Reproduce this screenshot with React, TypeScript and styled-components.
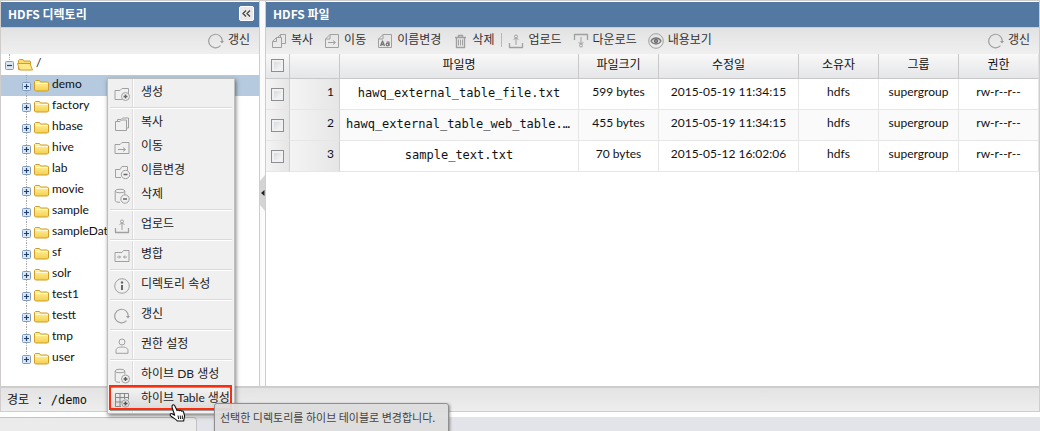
import React from 'react';
import styled, { createGlobalStyle, css } from 'styled-components';

const sans = `Lato, "Noto Sans CJK KR", sans-serif`;
const hangul = `"Noto Sans CJK KR", sans-serif`;
const mono = `"DejaVu Sans Mono", "Noto Sans CJK KR", monospace`;
const line = '#cfcccc';

const GlobalStyle = createGlobalStyle`
  *, *::before, *::after { box-sizing: border-box; }
  body { margin: 0; background: #fff; color: #222; font: 12px/16px ${sans}; }
  button { border: 0; padding: 0; background: none; color: inherit; font: inherit; cursor: default; }
  ul { list-style: none; margin: 0; padding: 0; }
  svg { display: block; flex: none; }
`;

const Page = styled.div`
  position: relative;
  display: flex;
  flex-direction: column;
  height: 100vh;
  overflow: hidden;
`;

const Workspace = styled.main`
  display: flex;
  flex: 1;
  min-height: 0;
  border-top: 1px solid ${line};
`;

const Panel = styled.section<{ $grow?: boolean }>`
  display: flex;
  flex-direction: column;
  flex: ${(p) => (p.$grow ? '1' : '0 0 260px')};
  min-width: 0;
  padding-top: 1px;
  border: solid ${line};
  border-width: 0 1px;
  background: #fff;
`;

const PanelHeader = styled.header`
  display: flex;
  align-items: center;
  justify-content: space-between;
  flex: none;
  height: 26px;
  padding: 0 5px 2px 7px;
  background: #5379a2;
  border-bottom: 1px solid #c5d0dc;
`;

const PanelTitle = styled.h2`
  margin: 0;
  color: #fff;
  font: bold 12px/16px ${hangul};
`;

const CollapseButton = styled.button`
  display: grid;
  place-items: center;
  width: 15px;
  height: 15px;
  border: 1px solid #fff;
  border-radius: 2px;
  background: #e9e9e9;
`;

const Toolbar = styled.div`
  display: flex;
  align-items: center;
  flex: none;
  gap: 11px;
  height: 26px;
  padding: 0 9px 2px 5px;
  background: linear-gradient(#e2e2e2, #efefef);
  color: #333;
`;

const ToolButton = styled.button<{ $end?: boolean }>`
  display: flex;
  align-items: flex-start;
  gap: 4px;
  margin-left: ${(p) => (p.$end ? 'auto' : '0')};
  font-family: ${hangul};
  white-space: nowrap;

  svg { margin-top: 2px; }
`;

const ToolDivider = styled.span`
  width: 1px;
  height: 14px;
  margin: 0 -5px 0 -4px;
  background: #bfb8a6;
`;

const Tree = styled.ul`
  flex: 1;
  overflow: hidden;
`;

const TreeRow = styled.li<{ $child?: boolean; $selected?: boolean }>`
  position: relative;
  display: flex;
  gap: 3px;
  height: 21px;
  padding-left: ${(p) => (p.$child ? '21px' : '4px')};
  background: ${(p) => (p.$selected ? '#b5cade' : 'transparent')};
  color: #111;

  &::before {
    content: '';
    position: absolute;
    left: ${(p) => (p.$child ? '25px' : '8px')};
    top: 0;
    height: ${(p) => (p.$child ? '21px' : '8px')};
    border-left: 1px dotted #aaa;
  }
  &:last-child::before { height: 8px; }
`;

const TreeToggle = styled.button`
  position: relative;
  align-self: flex-end;
  margin-bottom: 5px;
`;

const FolderSlot = styled.span`
  padding-top: 4px;
`;

const TreeLabel = styled.span`
  line-height: 18px;
`;

const Splitter = styled.div`
  display: flex;
  flex: 0 0 5px;
  padding-top: 174px;
  background: #fbfbfb;
`;

const TableArea = styled.div`
  flex: 1;
  overflow: hidden;
`;

const FileTable = styled.table`
  width: 100%;
  table-layout: fixed;
  border-collapse: separate;
  border-spacing: 0;
`;

const HeadCell = styled.th<{ $width?: number }>`
  width: ${(p) => (p.$width ? `${p.$width}px` : 'auto')};
  height: 25px;
  padding: 0 0 5px;
  border: solid #c8c8c8;
  border-width: 0 1px 1px 0;
  background: linear-gradient(#f8f8f8, #e5e6e8);
  color: #111;
  font: 12px/16px ${hangul};
  text-align: center;

  &:first-child { padding: 0 0 1px; }
  &:last-child { border-right-color: #e2e2e2; }
`;

const BodyRow = styled.tr`
  &:nth-child(even) { background: #fafafa; }
`;

const cellBase = css`
  height: 31px;
  padding: 0 6px 5px;
  border: solid #e6e6e6;
  border-width: 0 1px 1px 0;
  color: #111;
  text-align: center;
  overflow: hidden;
  text-overflow: ellipsis;
  white-space: nowrap;
`;

const Cell = styled.td`
  ${cellBase}
`;

const NameCell = styled.td`
  ${cellBase}
  padding: 0 6px 2px;
  font-family: ${mono};
`;

const SideCell = styled.td<{ $number?: boolean }>`
  ${cellBase}
  padding: ${(p) => (p.$number ? '0 5px 5px' : '0')};
  border-right-color: #d0d0d0;
  background: linear-gradient(90deg, #f4f4f4, #e6e6e6);
  text-align: ${(p) => (p.$number ? 'right' : 'center')};
`;

const Tick = styled.input`
  display: block;
  appearance: none;
  width: 13px;
  height: 13px;
  margin: 0 0 0 5px;
  border: 1px solid #8d8f92;
  background: linear-gradient(135deg, #cfd3d8, #fdfdfd);
  box-shadow: inset 0 0 0 2px #f1f1f1;
`;

const PathBar = styled.div`
  flex: none;
  height: 26px;
  padding: 4px 6px;
  border: 1px solid #d2cdcd;
  border-top: 2px solid #cfcccc;
  background: linear-gradient(#e3e3e3, #eee);
  color: #111;
  font-family: ${mono};
  white-space: pre;
`;

const BelowArea = styled.div`
  flex: none;
  height: 19px;
  border-top: 5px solid #fff;
  background: #e3e4e9;
`;

const DockedTab = styled.div`
  width: 197px;
  height: 14px;
  border: 1px solid #c2c2c2;
  border-width: 1px 1px 0 0;
  border-radius: 0 4px 0 0;
  background: #ebebeb;
`;

const ContextMenu = styled.div`
  position: absolute;
  left: 107px;
  top: 78px;
  width: 128px;
  padding: 2px;
  border: 1px solid #bdbdbd;
  background: linear-gradient(90deg, transparent 24px, #dcdcdc 24px, #dcdcdc 25px, #fff 25px, #fff 26px, transparent 26px), #f0f0f0;
  box-shadow: 1px 2px 4px rgba(0, 0, 0, 0.5);
`;

const MenuGroup = styled.ul`
  & + & {
    margin-top: 2px;
    padding-top: 2px;
    border-top: 1px solid #dadada;
    box-shadow: inset 0 1px #fff;
  }
  & + &::before {
    content: '';
    display: block;
    height: 1px;
  }
`;

const MenuItem = styled.li`
  position: relative;
`;

const MenuButton = styled.button<{ $active?: boolean }>`
  display: flex;
  gap: 11px;
  width: 100%;
  height: 24px;
  padding: 3px 0 0 4px;
  white-space: nowrap;

  svg { margin-top: 2px; }

  ${(p) =>
    p.$active &&
    css`
      background: linear-gradient(#f4f4f4, #d8d8d8);
      box-shadow: inset 0 0 0 1px #9a9a9a;
    `}
`;

const Callout = styled.span`
  position: absolute;
  left: -1px;
  top: -2px;
  width: 123px;
  height: 25px;
  border: 2px solid #fb2d0c;
  pointer-events: none;
`;

const Tooltip = styled.span`
  position: absolute;
  left: 104px;
  top: 16px;
  width: 235px;
  height: 32px;
  padding: 5px;
  border: 1px solid #8f8f8f;
  border-radius: 3px;
  background: rgba(221, 221, 221, 0.94);
  box-shadow: 1px 1px 3px rgba(0, 0, 0, 0.4);
  color: #444;
  font: 11px/16px ${hangul};
  white-space: nowrap;
`;

const Pointer = styled.span`
  position: absolute;
  left: 59px;
  top: 17px;
`;

const drawings: Record<string, React.ReactNode> = {
  copy: (
    <>
      <path d="M7 4 9.500 1.500h5v9h-4M9.500 1.500V4.500" />
      <path d="M1.500 8.500 5.500 4.500h5v10h-9zM5.500 4.500v4h-4" />
    </>
  ),
  move: (
    <>
      <path d="M1.500 6 6 1.500h8.500v13h-13zM6 1.500V6H1.500" />
      <path d="M4 9.500h7M9 7.500l2.500 2L9 11.500" />
    </>
  ),
  rename: (
    <>
      <path d="M1.500 6 6 1.500h8.500v13h-13zM6 1.500V6H1.500" />
      <path d="M3.500 13 5.500 8 7.500 13M4.500 11.500h2" stroke="#777" strokeWidth="1.300" />
      <circle cx="10.500" cy="11.500" r="1.300" stroke="#777" strokeWidth="1.300" />
      <path d="M9.500 9h2.500v4" stroke="#777" strokeWidth="1.200" />
    </>
  ),
  trash: (
    <>
      <path d="M3 4.500h11M6.500 4V2.500h4V4M4.500 5v9.500h8V5" strokeWidth="1.400" />
      <path d="M6.500 6.500v6M8.500 6.500v6M10.500 6.500v6" />
    </>
  ),
  upload: (
    <>
      <path d="M1.500 10v4.500h13V10" strokeWidth="1.300" />
      <path d="M8 12V5" />
      <circle cx="8" cy="3.500" r="1.500" />
      <path d="M5.500 6.500 8 5l2.500 1.500" />
    </>
  ),
  download: (
    <>
      <path d="M1.500 7V1.500h13V7" strokeWidth="1.300" />
      <path d="M8 4v7" />
      <circle cx="8" cy="12.500" r="1.500" />
      <path d="M5.500 9.500 8 11l2.500-1.500" />
    </>
  ),
  view: (
    <>
      <circle cx="8" cy="8" r="7.300" />
      <path d="M3 8c2.500-4 7.500-4 10 0-2.500 4-7.500 4-10 0z" stroke="#777" strokeWidth="1.300" />
      <circle cx="8" cy="8" r="1.800" fill="#888" stroke="#666" />
    </>
  ),
  refresh: (
    <>
      <path d="M12.500 12.700A6.800 6.800 0 1 1 14.300 8.500" strokeWidth="1.200" />
      <path d="M12 8h4l-2 2.600z" fill="#999" stroke="none" />
    </>
  ),
  create: (
    <>
      <path d="M8 13.500H1v-9h5l2-2h6.500v5" />
      <circle cx="11.500" cy="10.500" r="4" />
      <path d="M9.500 10.500h4M11.500 8.500v4" stroke="#666" strokeWidth="1.500" />
    </>
  ),
  folderCopy: (
    <>
      <path d="M1.500 5.500H6l1.500-1.500h5v10.500h-11z" />
      <path d="M3.500 5V3.500H7L8.500 2h6v10h-2" />
    </>
  ),
  folderMove: (
    <>
      <path d="M1 4.500h5l2-2h7v11H1z" />
      <path d="M4 9.500h7M9 7.500l2.500 2L9 11.500" />
    </>
  ),
  folderMinus: (
    <>
      <path d="M7 13.500H1.500v-8H6l2-3h5.500v4" />
      <circle cx="11.500" cy="10.500" r="4.200" />
      <path d="M9.500 10.500h4" stroke="#666" strokeWidth="1.500" />
    </>
  ),
  dbMinus: (
    <>
      <ellipse cx="6" cy="3" rx="4.800" ry="1.800" />
      <path d="M1.200 3v9.500c0 1.200 2 1.800 4.800 1.800M10.800 3v3.500" />
      <circle cx="11" cy="11" r="4.200" />
      <path d="M9 11h4" stroke="#666" strokeWidth="1.500" />
    </>
  ),
  merge: (
    <>
      <path d="M1 4.500h7l1.500-2H15v11H1z" />
      <path d="M3 9h3.500M9.500 9H13M5 7.500 6.500 9 5 10.500M11 7.500 9.500 9l1.500 1.500" />
    </>
  ),
  info: (
    <>
      <circle cx="8" cy="8" r="7.300" />
      <path d="M8 7v5" stroke="#666" strokeWidth="2" />
      <circle cx="8" cy="4.500" r="1.200" fill="#666" stroke="none" />
    </>
  ),
  person: (
    <>
      <circle cx="8" cy="4" r="3" />
      <path d="M2 15.300v-2.500c0-2.500 2-3.800 6-3.800s6 1.300 6 3.800v2.500z" />
    </>
  ),
  dbPlus: (
    <>
      <ellipse cx="6" cy="3" rx="4.800" ry="1.800" />
      <path d="M1.200 3v9.500c0 1.200 2 1.800 4.800 1.800M10.800 3v3.500" />
      <circle cx="11.500" cy="11" r="4" />
      <path d="M9.500 11h4M11.500 9v4" stroke="#555" strokeWidth="1.500" />
    </>
  ),
  tablePlus: (
    <>
      <path d="M7 14.500H1.500v-13h13v6M1.500 5.500h13M1.500 10H8M6 1.500v13M10.500 1.500V7" stroke="#888" />
      <circle cx="11.500" cy="11.500" r="3.700" />
      <path d="M9.500 11.500h4M11.500 9.500v4" stroke="#555" strokeWidth="1.500" />
    </>
  ),
};

const Icon = ({ name }: { name: string }) => (
  <svg width="16" height="16" viewBox="0 0 16 16" fill="none" stroke="#a0a0a0" strokeLinejoin="round" aria-hidden="true">
    {drawings[name]}
  </svg>
);

const ToggleIcon = ({ open }: { open?: boolean }) => (
  <svg width="9" height="9" viewBox="0 0 9 9" fill="none" aria-hidden="true">
    <rect x=".5" y=".5" width="8" height="8" rx="1" fill="#dce7f5" stroke="#7f9cc0" />
    <path d={open ? 'M2 4.500h5' : 'M2 4.500h5M4.500 2v5'} stroke="#23406b" strokeWidth="1.200" />
  </svg>
);

const FolderIcon = () => (
  <svg width="15" height="13" viewBox="0 0 15 13" aria-hidden="true">
    <defs>
      <linearGradient id="folder" x2="0" y2="1">
        <stop stopColor="#fff6a8" />
        <stop offset="1" stopColor="#f5cf4c" />
      </linearGradient>
    </defs>
    <path d="M.5 11V2.500L1.500 1.500h4l1 1.500h7l1 1V11l-1 1h-12z" fill="url(#folder)" stroke="#d09c2c" />
    <path d="M1.500 4.500h12" stroke="#fffbd8" />
  </svg>
);

const OpenFolderIcon = () => (
  <svg width="16" height="13" viewBox="0 0 16 13" aria-hidden="true">
    <path d="M1.500 11.500V2.500l1-1h3.500l1 1.500h6l.5 1v7z" fill="#f8dc6c" stroke="#d09c2c" />
    <path d="M2.500 12 .5 5.500h12.500l2.500 6.500z" fill="#ffe989" stroke="#d09c2c" />
  </svg>
);

const HandIcon = () => (
  <svg width="17" height="18" viewBox="0 0 17 18" strokeLinejoin="round" aria-hidden="true">
    <path
      d="M3.200 1.600C3.900.4 5.300.6 5.800 1.800L8 6.600c.6-.9 1.800-.8 2.200.2.700-.8 1.900-.6 2.300.4.800-.5 1.700-.1 2 .8l1 3.300c.3 1.500-.6 2.900-.8 5.700H8.300C7.500 15.300 4.500 14.500 1.700 11.800.4 10.400 1.600 9 3 9.700l2.700 1.500-2.500-7.400c-.3-.8-.3-1.600 0-2.200z"
      fill="#fff"
      stroke="#111"
      strokeWidth="1.100"
    />
    <path d="m9 11.500.6 3.500M11.200 11.500l.3 3.500M13.300 11.500V15" stroke="#111" />
  </svg>
);

const directories = [
  'demo', 'factory', 'hbase', 'hive', 'lab', 'movie', 'sample',
  'sampleData', 'sf', 'solr', 'test1', 'testt', 'tmp', 'user',
];

const fileTools = [
  ['copy', '복사'],
  ['move', '이동'],
  ['rename', '이름변경'],
  ['trash', '삭제'],
];

const transferTools = [
  ['upload', '업로드'],
  ['download', '다운로드'],
  ['view', '내용보기'],
];

const columns: [string, number?][] = [
  ['파일명'],
  ['파일크기', 80],
  ['수정일', 140],
  ['소유자', 80],
  ['그룹', 80],
  ['권한', 80],
];

const files = [
  ['hawq_external_table_file.txt', '599 bytes', '2015-05-19 11:34:15'],
  ['hawq_external_table_web_table.txt', '455 bytes', '2015-05-19 11:34:15'],
  ['sample_text.txt', '70 bytes', '2015-05-12 16:02:06'],
];

const menuGroups = [
  [['create', '생성']],
  [['folderCopy', '복사'], ['folderMove', '이동'], ['folderMinus', '이름변경'], ['dbMinus', '삭제']],
  [['upload', '업로드']],
  [['merge', '병합']],
  [['info', '디렉토리 속성']],
  [['refresh', '갱신']],
  [['person', '권한 설정']],
  [['dbPlus', '하이브 DB 생성'], ['tablePlus', '하이브 Table 생성']],
];

const Tool = ({ icon, label, end }: { icon: string; label: string; end?: boolean }) => (
  <ToolButton type="button" $end={end}>
    <Icon name={icon} />
    {label}
  </ToolButton>
);

export default function App() {
  return (
    <Page>
      <GlobalStyle />
      <Workspace>
        <Panel>
          <PanelHeader>
            <PanelTitle>HDFS 디렉토리</PanelTitle>
            <CollapseButton type="button" aria-label="접기">
              <svg width="9" height="9" viewBox="0 0 9 9" fill="none" stroke="#444" strokeWidth="1.300" aria-hidden="true">
                <path d="M4 1.500 1 4.500l3 3M8 1.500l-3 3 3 3" />
              </svg>
            </CollapseButton>
          </PanelHeader>
          <Toolbar>
            <Tool icon="refresh" label="갱신" end />
          </Toolbar>
          <Tree>
            <TreeRow>
              <TreeToggle type="button" aria-label="접기">
                <ToggleIcon open />
              </TreeToggle>
              <FolderSlot>
                <OpenFolderIcon />
              </FolderSlot>
              <TreeLabel>/</TreeLabel>
            </TreeRow>
            {directories.map((name, i) => (
              <TreeRow key={name} $child $selected={i === 0}>
                <TreeToggle type="button" aria-label="펼치기">
                  <ToggleIcon />
                </TreeToggle>
                <FolderSlot>
                  <FolderIcon />
                </FolderSlot>
                <TreeLabel>{name}</TreeLabel>
              </TreeRow>
            ))}
          </Tree>
        </Panel>
        <Splitter>
          <svg width="5" height="36" viewBox="0 0 5 36" aria-hidden="true">
            <path d="M5 0v36L0 30V6z" fill="#d4d4d4" />
            <path d="M4.500 15v6L1 18z" fill="#222" />
          </svg>
        </Splitter>
        <Panel $grow>
          <PanelHeader>
            <PanelTitle>HDFS 파일</PanelTitle>
          </PanelHeader>
          <Toolbar>
            {fileTools.map(([icon, label]) => (
              <Tool key={icon} icon={icon} label={label} />
            ))}
            <ToolDivider />
            {transferTools.map(([icon, label]) => (
              <Tool key={icon} icon={icon} label={label} />
            ))}
            <Tool icon="refresh" label="갱신" end />
          </Toolbar>
          <TableArea>
            <FileTable>
              <thead>
                <tr>
                  <HeadCell $width={24}>
                    <Tick type="checkbox" aria-label="전체 선택" />
                  </HeadCell>
                  <HeadCell $width={50} />
                  {columns.map(([label, width]) => (
                    <HeadCell key={label} $width={width}>
                      {label}
                    </HeadCell>
                  ))}
                </tr>
              </thead>
              <tbody>
                {files.map(([name, size, modified], i) => (
                  <BodyRow key={name}>
                    <SideCell>
                      <Tick type="checkbox" aria-label={name} />
                    </SideCell>
                    <SideCell $number>{i + 1}</SideCell>
                    <NameCell>{name}</NameCell>
                    <Cell>{size}</Cell>
                    <Cell>{modified}</Cell>
                    <Cell>hdfs</Cell>
                    <Cell>supergroup</Cell>
                    <Cell>rw-r--r--</Cell>
                  </BodyRow>
                ))}
              </tbody>
            </FileTable>
          </TableArea>
        </Panel>
      </Workspace>
      <PathBar>경로 : /demo</PathBar>
      <BelowArea>
        <DockedTab />
      </BelowArea>

      <ContextMenu>
        {menuGroups.map((group, g) => (
          <MenuGroup key={g}>
            {group.map(([icon, label]) => {
              const active = icon === 'tablePlus';
              return (
                <MenuItem key={icon}>
                  <MenuButton type="button" $active={active}>
                    <Icon name={icon} />
                    {label}
                  </MenuButton>
                  {active && (
                    <>
                      <Callout />
                      <Tooltip role="tooltip">선택한 디렉토리를 하이브 테이블로 변경합니다.</Tooltip>
                      <Pointer>
                        <HandIcon />
                      </Pointer>
                    </>
                  )}
                </MenuItem>
              );
            })}
          </MenuGroup>
        ))}
      </ContextMenu>
    </Page>
  );
}
